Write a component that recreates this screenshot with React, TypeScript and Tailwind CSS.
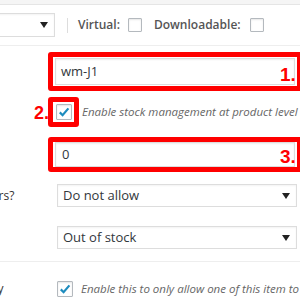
import type { ReactNode } from 'react'

// 小三角下拉箭头
function Caret() {
  return (
    <svg width="8" height="6" viewBox="0 0 8 6" className="shrink-0">
      <path d="M0 0 H8 L4 6 Z" fill="#222" />
    </svg>
  )
}

function Checkbox({ checked = false, size = 'md' }: { checked?: boolean; size?: 'sm' | 'md' }) {
  const box = size === 'sm' ? 'w-[14px] h-[14px]' : 'w-[16px] h-[16px]'
  return (
    <span
      className={`${box} shrink-0 flex items-center justify-center bg-white border border-[#b4b9be] rounded-[1px] shadow-[inset_0_1px_2px_rgba(0,0,0,0.1)]`}
    >
      {checked && (
        <svg width="12" height="12" viewBox="0 0 12 12">
          <path d="M1.8 6.4 L4.6 9.2 L10.4 2.4" stroke="#1e8cbe" strokeWidth="2.2" fill="none" />
        </svg>
      )}
    </span>
  )
}

function Select({ value, className = '' }: { value: string; className?: string }) {
  return (
    <div
      className={`shrink-0 flex items-center justify-between bg-white border border-[#ddd] shadow-[inset_0_1px_2px_rgba(0,0,0,0.05)] pl-[5px] pr-[6px] text-[13px] text-[#32373c] ${className}`}
    >
      <span className="whitespace-nowrap">{value}</span>
      <Caret />
    </div>
  )
}

// 红色标注框 + 序号
function Mark({ children, className = '' }: { children: ReactNode; className?: string }) {
  return (
    <div className={`relative shrink-0 border-[5px] border-[#ff0000] rounded-[3px] ${className}`}>{children}</div>
  )
}

const num = "font-['Liberation_Sans',sans-serif] font-bold text-[#ff0000] leading-none"
const label = 'shrink-0 text-[12px] text-[#333] whitespace-nowrap'

export default function App() {
  return (
    <div className="relative w-[300px] h-[300px] overflow-hidden bg-white font-['Open_Sans',sans-serif]">
      {/* 顶部灰条 */}
      <div className="h-[5px] bg-[#f5f5f5] border-b border-[#e5e5e5]" />

      {/* 产品类型工具栏 */}
      <div className="h-[41px] flex items-center border-b border-[#eee]">
        <Select value="Simple product" className="-ml-[110px] w-[165px] h-[24px]" />
        <div className="ml-[12px] w-px h-[15px] bg-[#ddd]" />
        <span className="ml-[10px] text-[12px] font-semibold text-[#555]">Virtual:</span>
        <span className="ml-[8px]">
          <Checkbox size="sm" />
        </span>
        <span className="ml-[12px] text-[12px] font-semibold text-[#555]">Downloadable:</span>
        <span className="ml-[9px]">
          <Checkbox size="sm" />
        </span>
      </div>

      {/* 库存表单 */}
      <div className="-ml-[87px] w-[389px]">
        {/* SKU */}
        <div className="flex items-center mt-[6px]">
          <label className={`w-[135px] ${label}`}>SKU</label>
          <Mark className="w-[254px] h-[39px] py-[1px] px-[2px]">
            <div className="h-[27px] w-[240px] border border-[#ddd] shadow-[inset_0_1px_2px_rgba(0,0,0,0.07)] flex items-center pl-[5px] text-[13px] text-[#32373c]">
              wm-J1
            </div>
            <span className={`absolute left-[227px] top-[8px] text-[19px] ${num}`}>1.</span>
          </Mark>
        </div>

        {/* 管理库存 */}
        <div className="flex items-center mt-[6px]">
          <label className={`w-[135px] ${label}`}>Manage stock?</label>
          <Mark className="w-[31px] h-[30px] flex items-center justify-center">
            <Checkbox checked />
            <span className={`absolute right-full mr-[4px] top-[2px] text-[18px] ${num}`}>2.</span>
          </Mark>
          <span className="ml-[3px] text-[11.5px] italic text-[#666] whitespace-nowrap">
            Enable stock management at product level
          </span>
        </div>

        {/* 库存数量 */}
        <div className="flex items-center mt-[10px]">
          <label className={`w-[135px] ${label}`}>Stock quantity</label>
          <Mark className="w-[254px] h-[35px] px-[2px]">
            <div className="h-[25px] w-[240px] border border-[#ddd] shadow-[inset_0_1px_2px_rgba(0,0,0,0.07)] flex items-center pl-[6px] text-[13px] text-[#32373c]">
              0
            </div>
            <span className={`absolute left-[227px] top-[5px] text-[19px] ${num}`}>3.</span>
          </Mark>
        </div>

        {/* 缺货下单 */}
        <div className="flex items-center mt-[12px]">
          <label className={`w-[144px] ${label}`}>Allow backorders?</label>
          <Select value="Do not allow" className="w-[240px] h-[23px]" />
        </div>

        {/* 库存状态 */}
        <div className="flex items-center mt-[19px]">
          <label className={`w-[144px] ${label}`}>Stock status</label>
          <Select value="Out of stock" className="w-[240px] h-[23px]" />
        </div>

        <div className="mt-[12px] ml-[87px] border-b border-[#eee]" />

        {/* 单独售卖 */}
        <div className="flex items-center mt-[18px]">
          <label className={`w-[144px] ${label}`}>Sold individually</label>
          <Checkbox checked />
          <span className="ml-[8px] text-[11.5px] italic text-[#666] whitespace-nowrap">
            Enable this to only allow one of this item to be bought in a single order
          </span>
        </div>
      </div>
    </div>
  )
}
